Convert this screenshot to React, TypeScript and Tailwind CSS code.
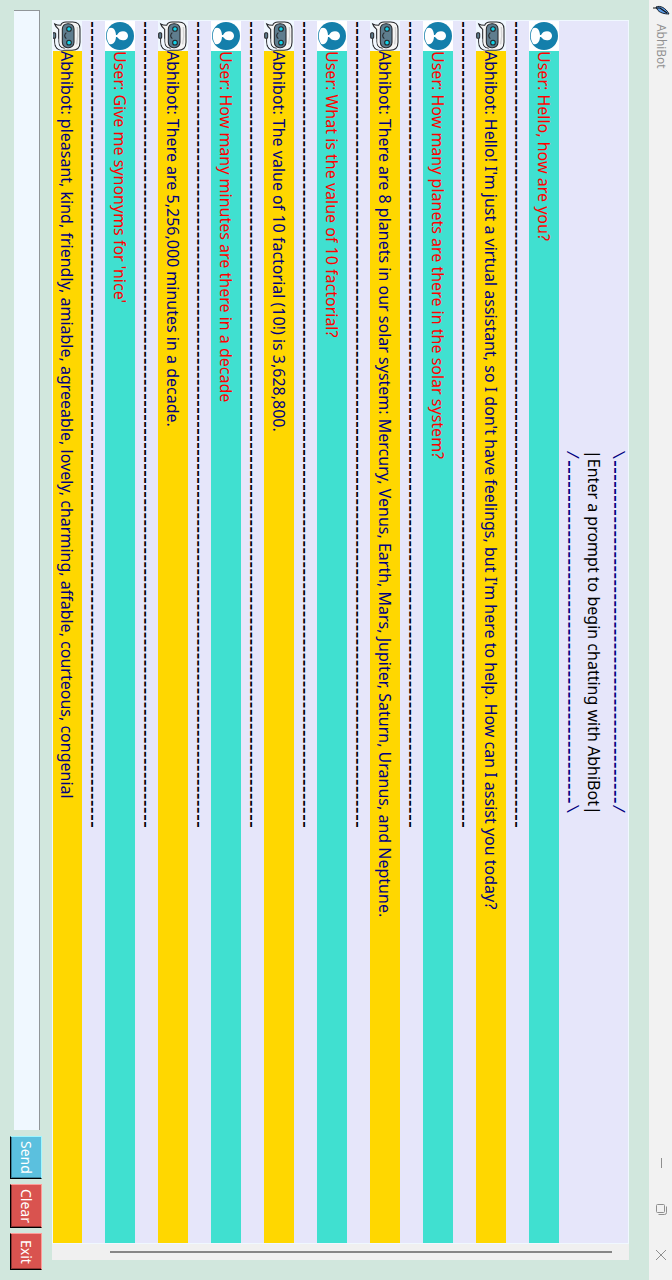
type Message = { from: "user" | "bot"; text: string };

const messages: Message[] = [
  { from: "user", text: "Hello, how are you?" },
  {
    from: "bot",
    text: "Hello! I'm just a virtual assistant, so I don't have feelings, but I'm here to help. How can I assist you today?",
  },
  { from: "user", text: "How many planets are there in the solar system?" },
  {
    from: "bot",
    text: "There are 8 planets in our solar system: Mercury, Venus, Earth, Mars, Jupiter, Saturn, Uranus, and Neptune.",
  },
  { from: "user", text: "What is the value of 10 factorial?" },
  { from: "bot", text: "The value of 10 factorial (10!) is 3,628,800." },
  { from: "user", text: "How many minutes are there in a decade" },
  { from: "bot", text: "There are 5,256,000 minutes in a decade." },
  { from: "user", text: "Give me synonyms for 'nice'" },
  {
    from: "bot",
    text: "pleasant, kind, friendly, amiable, agreeable, lovely, charming, affable, courteous, congenial",
  },
];

const separator = "-".repeat(115);
const bannerDashes = "-".repeat(49);

function UserAvatar() {
  return (
    <svg viewBox="0 0 90 90" className="size-[30px] shrink-0 bg-white" aria-hidden="true">
      <circle cx="45" cy="45" r="42" fill="#147fab" />
      <path d="M12 22 C24 16 33 28 33 45 C33 62 24 74 12 68 C3 54 3 36 12 22Z" fill="#fff" />
      <path d="M30 42 L36 42 C41 34 46 31 54 31 C63 31 69 37 69 44 C69 52 63 58 54 58 C46 58 41 54 36 48 L30 48Z" fill="#fff" />
    </svg>
  );
}

function BotAvatar() {
  return (
    <svg viewBox="0 0 90 90" className="size-[30px] shrink-0 bg-[#f0f8ff]" fill="none" stroke="#26282c" strokeWidth="3.2" aria-hidden="true">
      <path d="M8 52 L8 62 C8 80 18 88 34 88 L60 88 C76 88 84 78 84 64 L84 24 C84 10 76 3 62 3 L42 3 C33 3 28 7 26 13 C20 13 13 12 8 9 C10 16 14 20 20 25 L20 62 C20 74 26 81 38 82" fill="#f4f4f4" />
      <path d="M10 53 L19 53 L19 62 C19 74 25 81 36 84 L34 87 C18 86 10 78 10 62Z" fill="#f0f8ff" stroke="none" />
      <rect x="2" y="35" width="9" height="17" rx="3" fill="#5f7d8e" />
      <path d="M76 18 Q79 44 74 70" stroke="#d3d3d3" strokeWidth="4" />
      <rect x="31" y="8" width="35" height="72" rx="16" fill="#5f7d8e" />
      <circle cx="51" cy="24" r="7" fill="#12d3e8" />
      <circle cx="51" cy="65" r="7" fill="#12d3e8" />
      <path d="M43 35 Q33 44 43 53" />
    </svg>
  );
}

function MessageRow({ message }: { message: Message }) {
  const isUser = message.from === "user";
  return (
    <div className={`flex w-[30px] shrink-0 items-center ${isUser ? "bg-[#40e0d0] text-[#ff0000]" : "bg-[#ffd700] text-[#000080]"}`}>
      {isUser ? <UserAvatar /> : <BotAvatar />}
      <p className="whitespace-nowrap">
        {isUser ? "User: " : "Abhibot: "}
        {message.text}
      </p>
    </div>
  );
}

function Dashes({ text }: { text: string }) {
  return <span className="whitespace-nowrap font-['Inter',sans-serif] text-[15px] font-bold">{text}</span>;
}

function BannerEdge({ start, end }: { start: string; end: string }) {
  return (
    <p className="flex w-[23px] whitespace-nowrap font-['Liberation_Mono',monospace]">
      {start}
      <Dashes text={bannerDashes} />
      {end}
    </p>
  );
}

export default function App() {
  return (
    <div className="flex h-screen w-full flex-col bg-[#d1e7dd] font-['Comic_Sans_MS','Noto_Sans',sans-serif] text-[16px] leading-[22px] [writing-mode:vertical-rl]">
      <header className="flex w-[23px] shrink-0 items-center bg-[#f2f2f2] pt-1 pb-0.5 text-[#8f8f8f]">
        <svg viewBox="0 0 18 12" className="mb-2 h-3 w-[18px]" aria-hidden="true">
          <path d="M4 3 C8 1 14 4 17 10 C13 10 7 9 5 5Z" fill="#5b9be8" stroke="#16202c" strokeWidth="1" />
          <path d="M1 4 L8 4 L15 9" fill="none" stroke="#111" strokeWidth="1.2" />
        </svg>
        <h1 className="flex-1 font-['Open_Sans',sans-serif] text-[12px] leading-[16px]">AbhiBot</h1>
        <button type="button" aria-label="Minimize" className="flex h-[46px] w-full items-center justify-center">
          <svg viewBox="0 0 12 12" className="size-3" stroke="currentColor" aria-hidden="true">
            <path d="M6.500 1V11" />
          </svg>
        </button>
        <button type="button" aria-label="Restore" className="flex h-[46px] w-full items-center justify-center">
          <svg viewBox="0 0 12 12" className="size-3" fill="none" stroke="currentColor" aria-hidden="true">
            <rect x="1.500" y="1.500" width="8" height="8" rx="1" />
            <path d="M11.500 3.500V9.500Q11.500 11.500 9.500 11.500H3.500" />
          </svg>
        </button>
        <button type="button" aria-label="Close" className="flex h-[46px] w-full items-center justify-center">
          <svg viewBox="0 0 12 12" className="size-3" fill="none" stroke="currentColor" aria-hidden="true">
            <path d="M1 1L11 11M11 1L1 11" />
          </svg>
        </button>
      </header>

      <main className="flex min-w-0 flex-1 flex-col gap-[10px] pr-5 pl-[10px]">
        <section className="mt-5 mb-5 flex min-w-0 flex-1">
          <div className="flex min-w-0 flex-1 flex-col overflow-hidden border border-[#f0f8ff] bg-[#e6e6fa]">
            <div className="flex shrink-0 flex-col items-center leading-[23px] text-[#000080]">
              <BannerEdge start="\" end="/" />
              <p className="w-[23px] whitespace-nowrap text-black">|Enter a prompt to begin chatting with AbhiBot|</p>
              <BannerEdge start="/" end="\" />
            </div>
            {messages.map((message, index) => (
              <div key={message.text} className="flex shrink-0 flex-col">
                {index > 0 && (
                  <p className="w-[23px] leading-[23px] text-black">
                    <Dashes text={separator} />
                  </p>
                )}
                <MessageRow message={message} />
              </div>
            ))}
          </div>
          <div className="flex h-4 shrink-0 items-center bg-[#f0f0f0] pr-[17px] pl-[58px] [writing-mode:horizontal-tb]">
            <div className="h-0.5 flex-1 bg-[#868686]" />
          </div>
        </section>

        <form className="flex w-8 shrink-0 pt-[10px] pb-[10px] text-[14px] leading-[20px]" onSubmit={(event) => event.preventDefault()}>
          <input
            type="text"
            aria-label="Prompt"
            className="mr-0.5 mb-1.5 ml-1 min-h-0 flex-1 border-t border-r border-[#919699] bg-[#f0f8ff] pt-1 pb-1 outline-none"
          />
          <button
            type="submit"
            className="mb-[5px] h-[43px] border border-t-[#9ff6ff] border-r-[#9ff6ff] border-b-black border-l-black bg-[#5bc0de] text-center text-white shadow-[inset_1px_-1px_0_#3a8299]"
          >
            Send
          </button>
          <button
            type="button"
            className="mb-[5px] h-[44px] border border-t-[#ff9d99] border-r-[#ff9d99] border-b-black border-l-black bg-[#d9534f] text-center text-white shadow-[inset_1px_-1px_0_#8f3532]"
          >
            Clear
          </button>
          <button
            type="button"
            className="h-[37px] border border-t-[#ff9d99] border-r-[#ff9d99] border-b-black border-l-black bg-[#d9534f] text-center text-white shadow-[inset_1px_-1px_0_#8f3532]"
          >
            Exit
          </button>
        </form>
      </main>
    </div>
  );
}
